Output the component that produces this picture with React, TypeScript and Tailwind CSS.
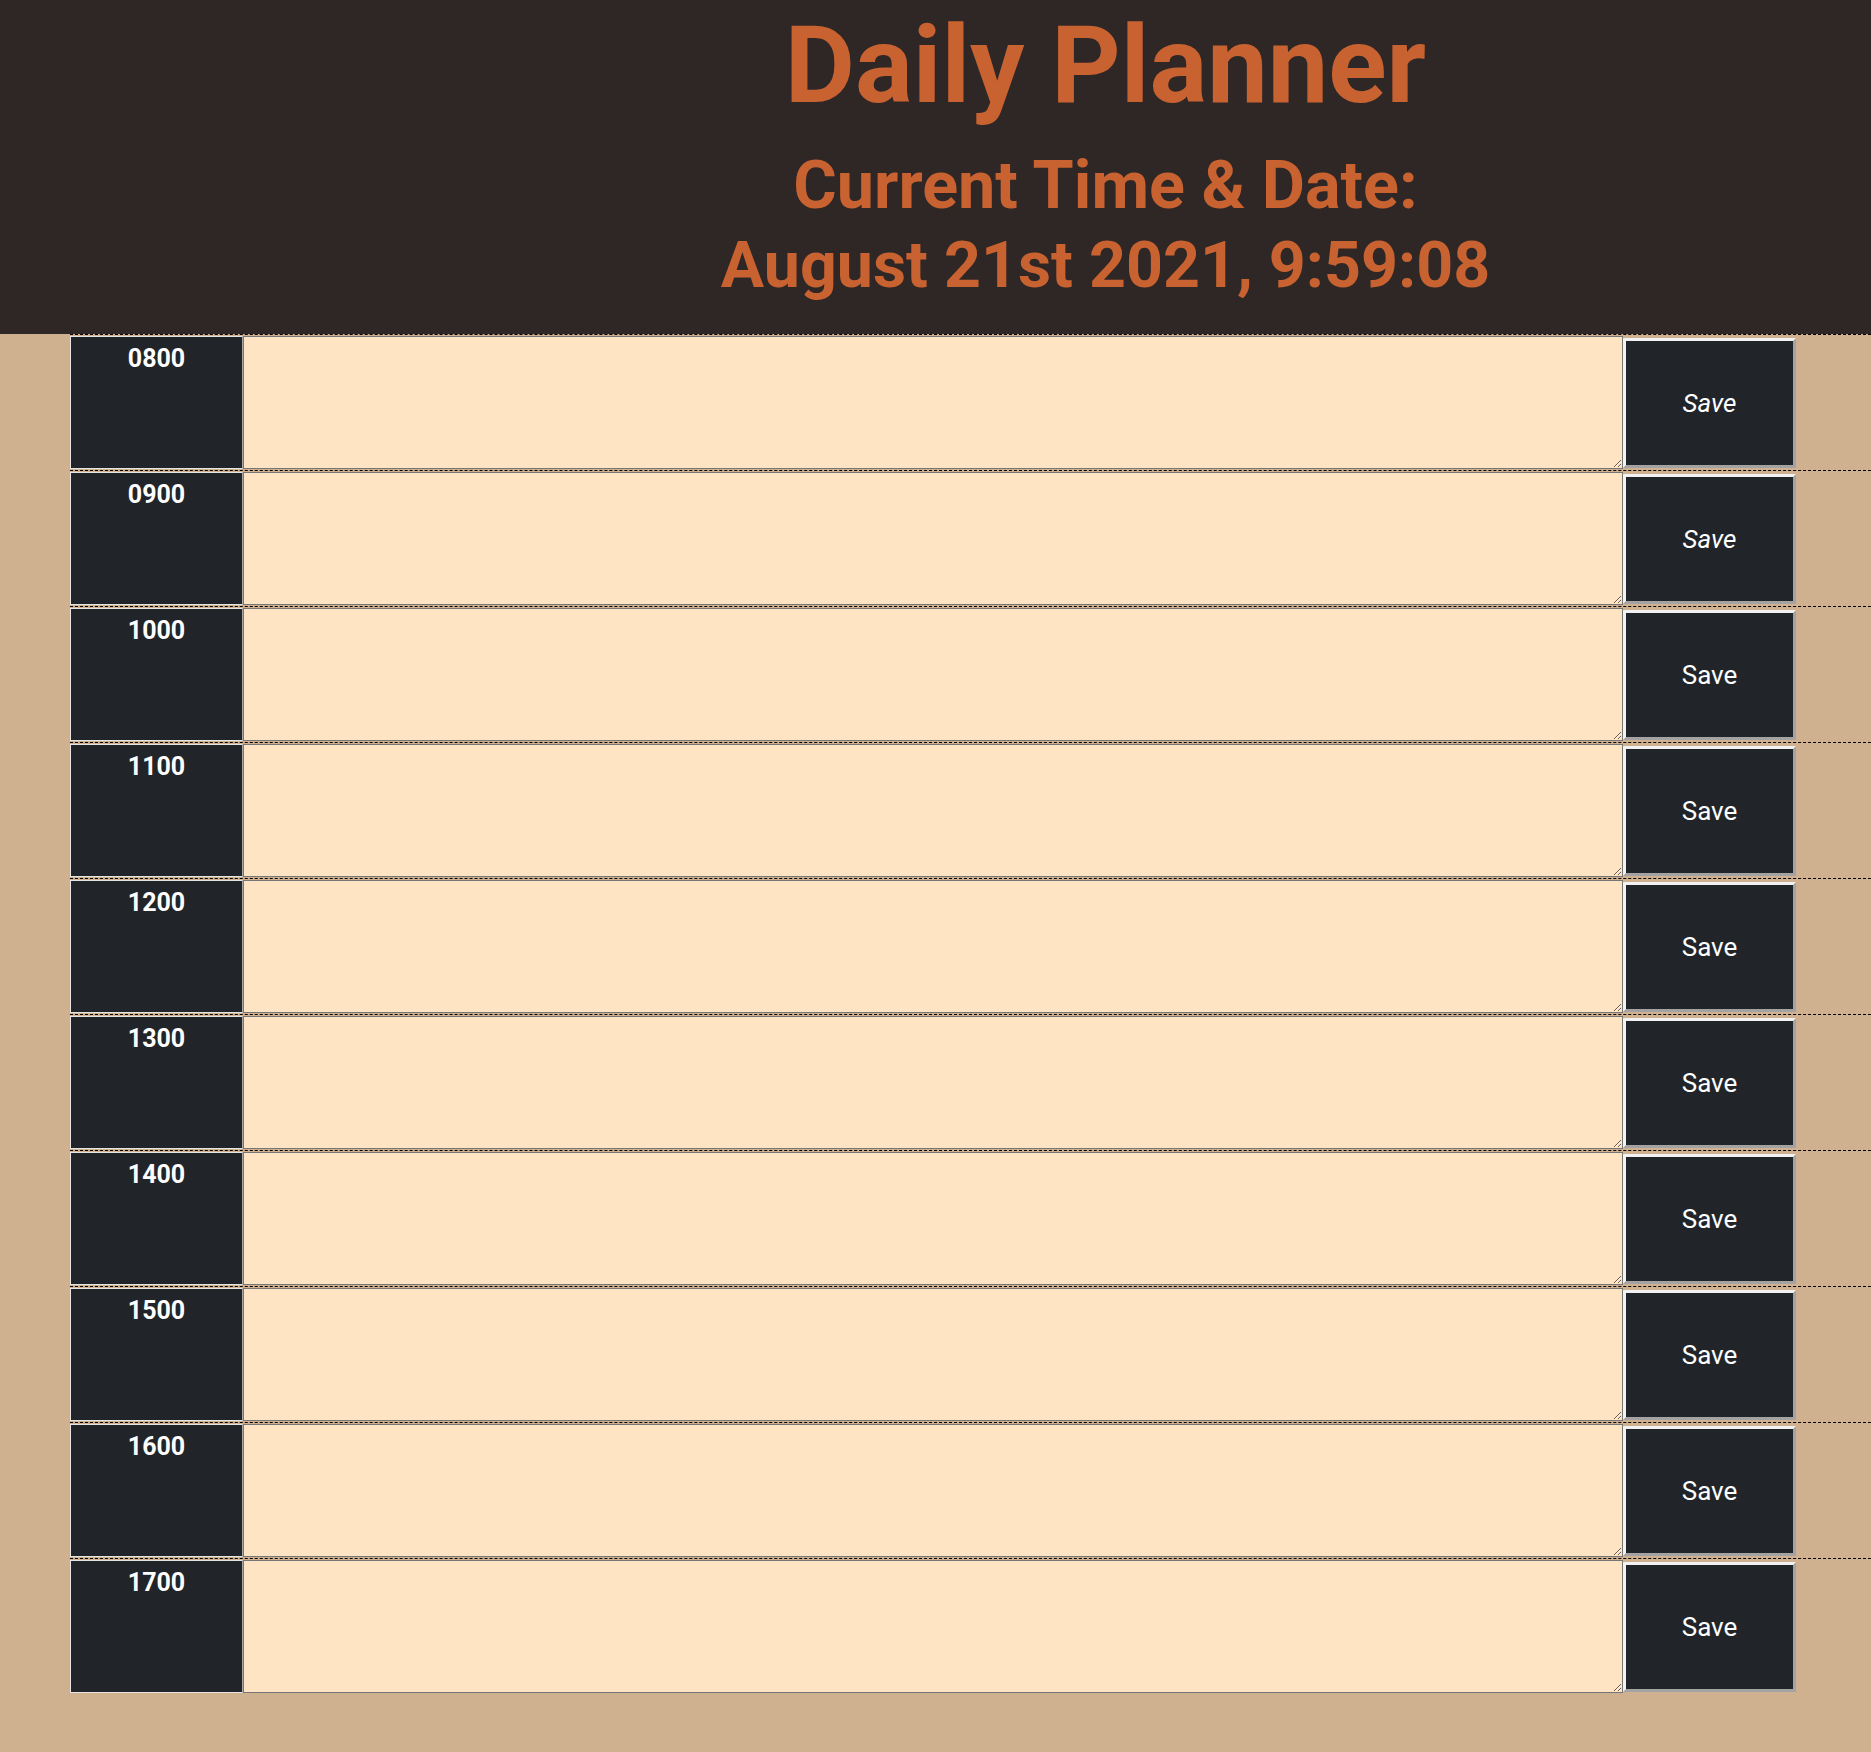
import React from "react";

const hours = ["0800", "0900", "1000", "1100", "1200", "1300", "1400", "1500", "1600", "1700"];

export default function App() {
  return (
    <div
      className="min-h-[1752px] bg-[#cfb18f]"
      style={{ fontFamily: 'Roboto, "Liberation Sans", sans-serif' }}
    >
      <header className="h-[334px] bg-[#2f2726] pl-[340px] pt-[1px] text-center text-[#c86230] font-bold">
        <h1 className="text-[108px] leading-[1.2]">Daily Planner</h1>
        <div className="mt-[14px]">
          <p className="text-[66.5px] leading-[80px]">Current Time &amp; Date:</p>
          <p className="text-[64.5px] leading-[80px]">August 21st 2021, 9:59:08</p>
        </div>
      </header>
      <main>
        {hours.map((h, i) => (
          <div
            key={h}
            className="ml-[70px] flex h-[136px] border-t border-dashed border-black py-[1px]"
          >
            <div className="w-[173px] border border-[#e4e4e4] border-r-[#a8a8a8] bg-[#212529] pt-[4px] text-center text-[25px] font-bold leading-[36px] text-white">
              {h}
            </div>
            <textarea className="w-[1380px] resize border border-[#767676] bg-[#ffe4c4] outline-none" />
            <button
              className={
                "mt-[2px] mb-[1px] flex w-[173px] items-center justify-center border-[3px] border-t-[#f2f2f2] border-l-[#f2f2f2] border-r-[#a3a3a3] border-b-[#a3a3a3] bg-[#212529] text-[26px] text-white " +
                (i < 2 ? "italic" : "not-italic")
              }
            >
              Save
            </button>
          </div>
        ))}
      </main>
    </div>
  );
}
